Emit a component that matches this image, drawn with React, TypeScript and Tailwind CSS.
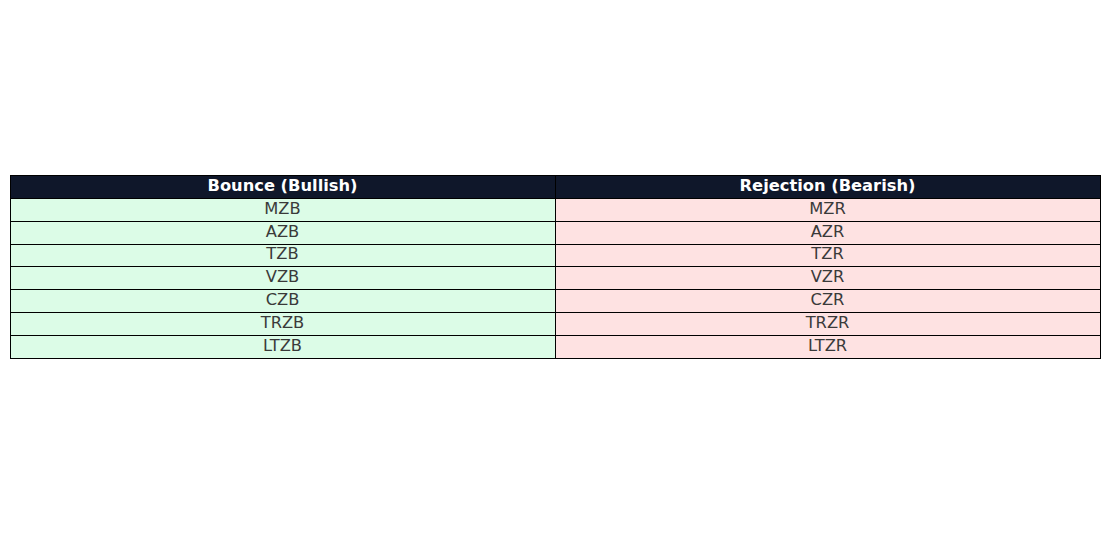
const ROWS = [
  ["MZB", "MZR"],
  ["AZB", "AZR"],
  ["TZB", "TZR"],
  ["VZB", "VZR"],
  ["CZB", "CZR"],
  ["TRZB", "TRZR"],
  ["LTZB", "LTZR"],
];

export default function App() {
  return (
    <div className="w-[1110px] h-[550px] bg-white pt-[175px] pl-[9.5px] font-['DejaVu_Sans',sans-serif] text-[16.3px] leading-none">
      <table className="w-[1091px] border-collapse table-fixed">
        <thead>
          <tr className="h-[23px] bg-[#0f172a] text-white font-bold">
            <th className="border border-black font-bold pb-[1px]">Bounce (Bullish)</th>
            <th className="border border-black font-bold pb-[1px]">Rejection (Bearish)</th>
          </tr>
        </thead>
        <tbody>
          {ROWS.map(([bull, bear], i) => (
            <tr key={i} className="h-[22.8px] text-[#3a3a3a]">
              <td className="border border-black bg-[#dcfce7] text-center pb-[2px]">{bull}</td>
              <td className="border border-black bg-[#fee2e2] text-center pb-[2px]">{bear}</td>
            </tr>
          ))}
        </tbody>
      </table>
    </div>
  );
}
